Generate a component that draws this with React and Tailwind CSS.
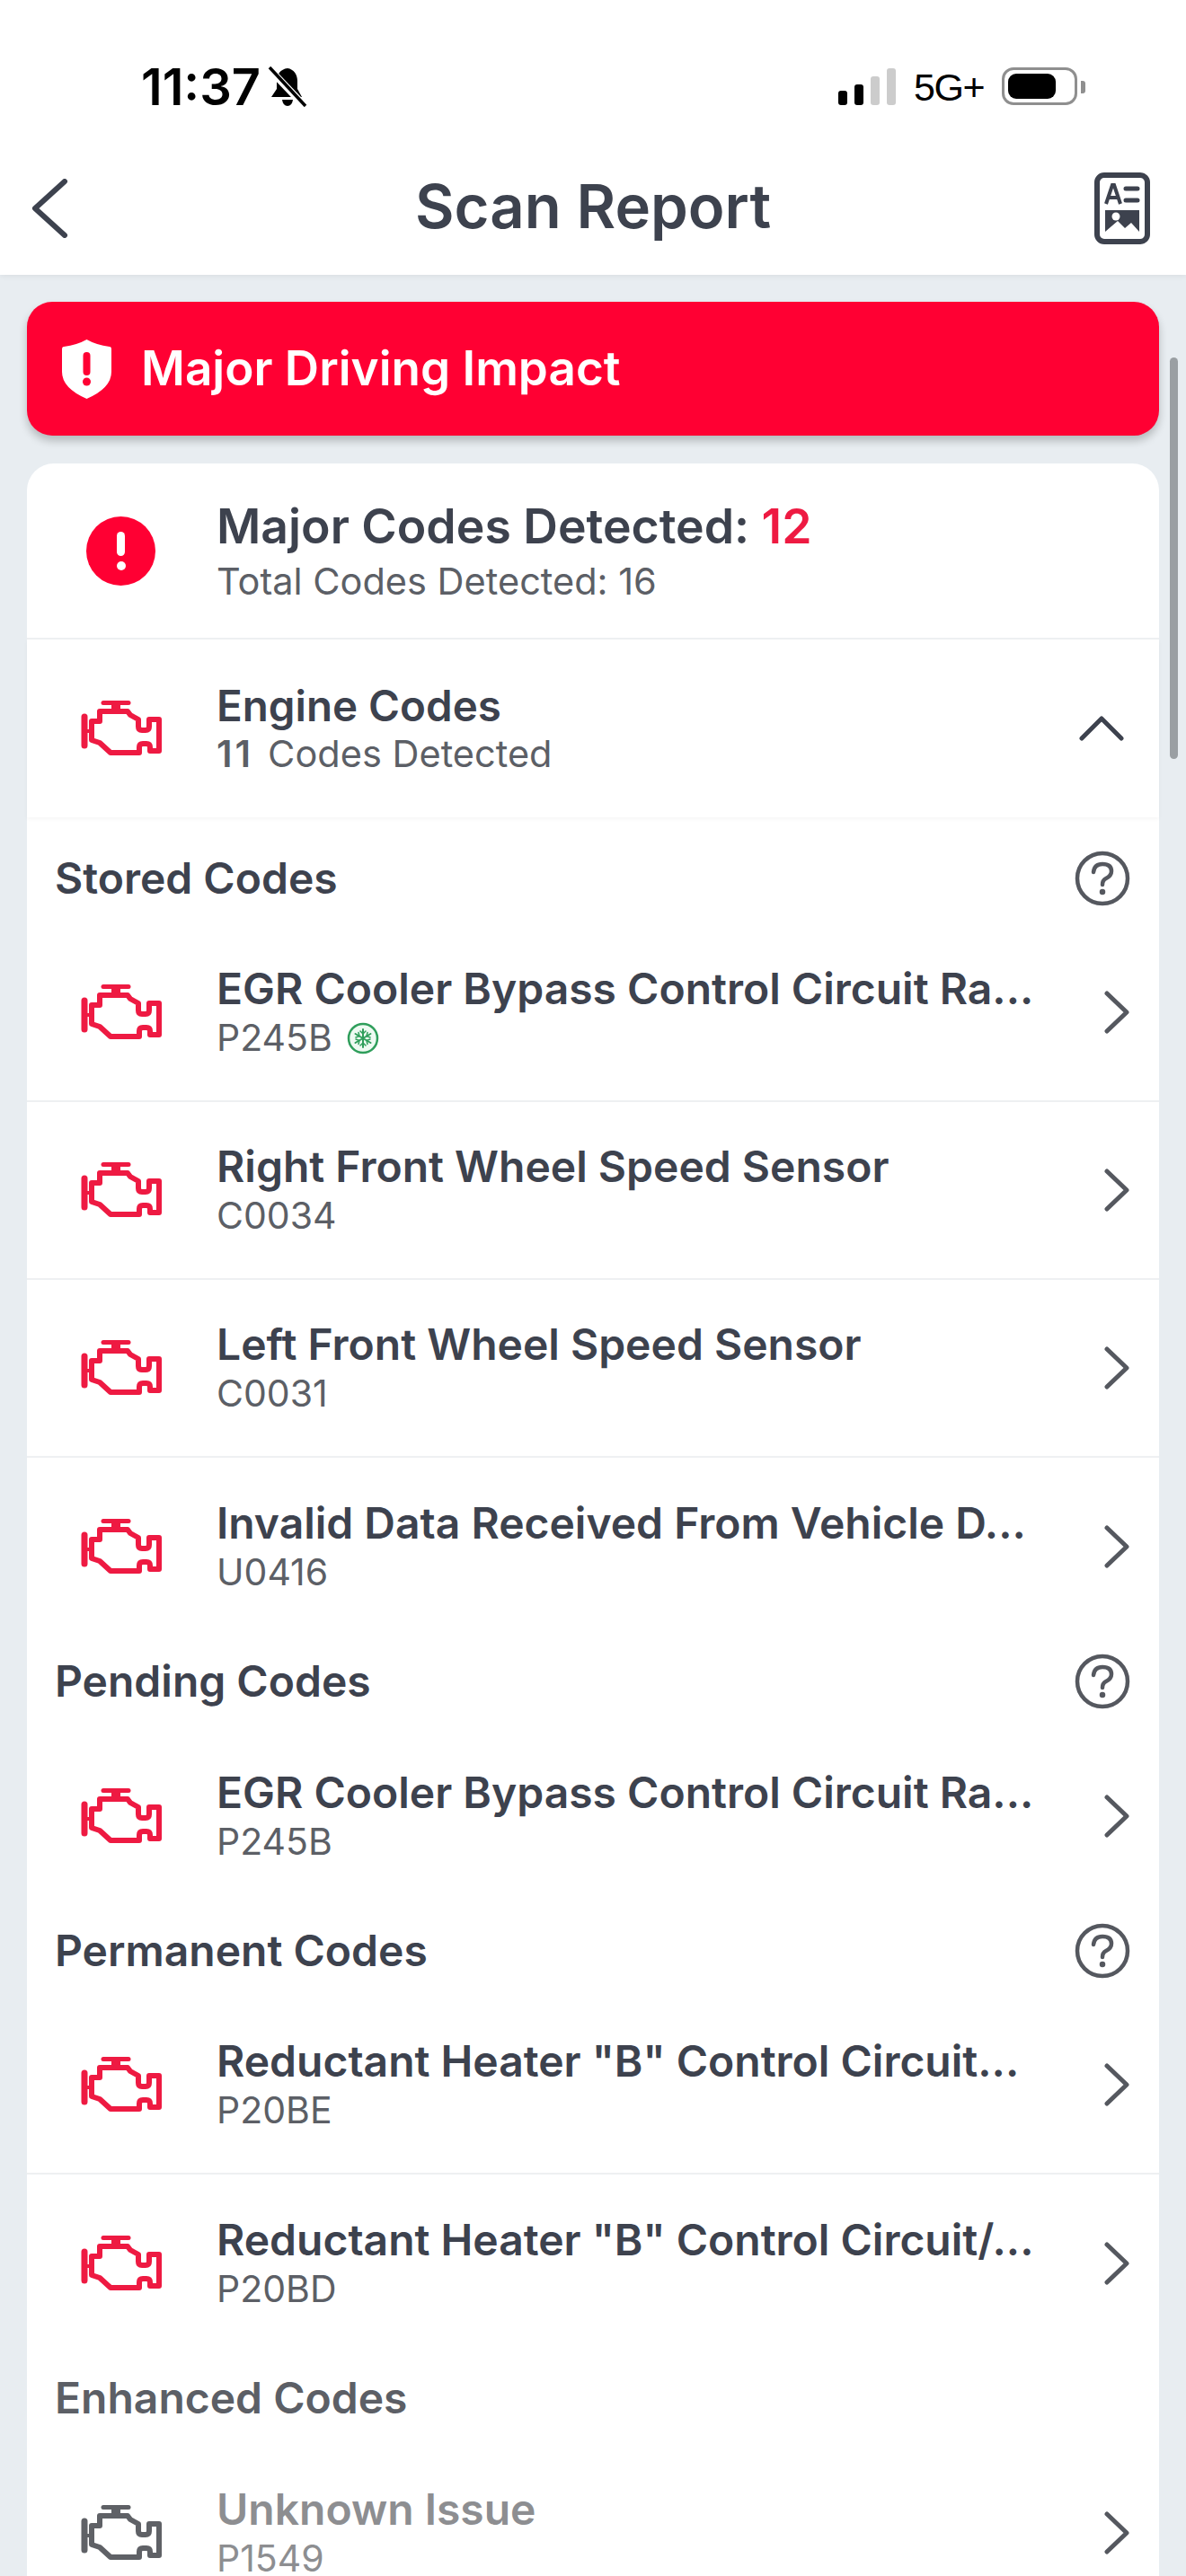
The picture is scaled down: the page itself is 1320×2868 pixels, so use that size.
const inter = "font-['Inter',sans-serif]";

function EngineIcon({ color = '#ee1a42' }) {
    return (
        <svg width="90" height="62" viewBox="0 0 90 62" fill="none" stroke={color} strokeWidth="6" strokeLinejoin="round" strokeLinecap="round">
            <path d="M25 2.5H53" strokeWidth="5" />
            <path d="M39 3V11" strokeWidth="10" strokeLinecap="butt" />
            <path d="M21 12H52L55 16L64 21V29Q64 33 68 33H72Q76 33 76 29V21H87V56H77V52Q77 48 73 48H69Q65 48 65 52V58H33L21 47L12 44V23H21Z" />
            <path d="M4 18V50" strokeWidth="7" />
            <path d="M7 34H12" strokeWidth="4" />
        </svg>
    );
}

function ChevronRight() {
    return (
        <svg width="30" height="48" viewBox="0 0 30 48" fill="none" stroke="#55585f" strokeWidth="5" strokeLinecap="round" strokeLinejoin="round">
            <path d="M4 3L26 24L4 45" />
        </svg>
    );
}

function HelpIcon() {
    return (
        <svg width="62" height="62" viewBox="0 0 62 62" fill="none" stroke="#55585f" strokeWidth="4.5" strokeLinecap="round">
            <circle cx="31" cy="31" r="28" />
            <path d="M21 24Q22 15 31 15Q41 15 41 23Q41 28 35 31Q31 33 31 38" />
            <circle cx="31" cy="46" r="2.5" fill="#55585f" strokeWidth="1.5" />
        </svg>
    );
}

function SnowBadge() {
    return (
        <svg width="36" height="36" viewBox="0 0 36 36" fill="none" stroke="#2f9e5b" strokeLinecap="round">
            <circle cx="18" cy="18" r="16" strokeWidth="2.5" fill="#eefaf2" />
            <g strokeWidth="2">
                <path d="M18 8V28M9.5 13L26.5 23M26.5 13L9.5 23" />
                <path d="M15 10L18 13L21 10M15 26L18 23L21 26M10 17L14 15.5L13 11.5M26 19L22 20.5L23 24.5M26 17L22 15.5L23 11.5M10 19L14 20.5L13 24.5" strokeWidth="1.5" />
            </g>
        </svg>
    );
}

function CodeRow({ title, code, frozen, muted, last }) {
    return (
        <div className={`h-[198px] flex items-center ${last ? '' : 'border-b-2 border-[#eef0f2]'}`}>
            <div className="w-[211px] pl-[60px] shrink-0">
                <EngineIcon color={muted ? '#5f6166' : '#ee1a42'} />
            </div>
            <div className="flex-1 min-w-0 pt-[2px]">
                <div className={`text-[48px] leading-[55px] font-semibold whitespace-nowrap ${muted ? 'text-[#8d8e91]' : 'text-[#3d424e]'}`}>{title}</div>
                <div className={`flex items-center gap-[16px] text-[41px] leading-[55px] ${muted ? 'text-[#8d8e91]' : 'text-[#5c5f66]'}`}>
                    {code}
                    {frozen && <SnowBadge />}
                </div>
            </div>
            <div className="w-[62px] shrink-0">
                <ChevronRight />
            </div>
        </div>
    );
}

function SectionHead({ title, help = true, first, muted }) {
    return (
        <div className={`flex items-center justify-between pl-[31px] pr-[32px] ${first ? 'h-[119px] pt-[17px]' : 'h-[102px]'}`}>
            <span className={`text-[48px] font-semibold ${muted ? 'text-[#5c5f66]' : 'text-[#3d424e]'}`}>{title}</span>
            {help && <HelpIcon />}
        </div>
    );
}

export default function App() {
    return (
        <div className={`relative w-[1320px] h-[2868px] overflow-hidden bg-[#e8edf1] ${inter}`}>
            {/* Status bar + title */}
            <div className="h-[306px] bg-white shadow-[0_2px_6px_rgba(0,0,0,0.06)]">
                <div className="h-[192px] flex items-start pl-[157px] pr-[112px] pt-[62px] text-black">
                    <span className="text-[56px] leading-[70px] font-semibold">11:37</span>
                    <svg className="mt-[12px] ml-[8px]" width="44" height="46" viewBox="0 0 44 46">
                        <path d="M22 2C14 3 10 9 10 16V25L4 34H38L33 25V16C33 9 29 3 22 2Z" fill="black" />
                        <path d="M16 37H28Q27 44 22 44Q17 44 16 37Z" fill="black" />
                        <path d="M1 2L41 44" stroke="white" strokeWidth="8" />
                        <path d="M2 1L42 44" stroke="black" strokeWidth="3.5" />
                    </svg>
                    <div className="flex-1" />
                    <div className="flex items-end gap-[8px] h-[41px] mt-[14px]">
                        <div className="w-[10px] h-[16px] rounded-[3px] bg-black" />
                        <div className="w-[10px] h-[23px] rounded-[3px] bg-black" />
                        <div className="w-[10px] h-[32px] rounded-[3px] bg-[#cccccc]" />
                        <div className="w-[10px] h-[41px] rounded-[3px] bg-[#cccccc]" />
                    </div>
                    <span className="ml-[20px] mt-[10px] text-[43px] leading-[50px] font-medium tracking-[-1.5px] font-['Liberation_Sans',sans-serif]">5G+</span>
                    <div className="ml-[20px] mt-[13px] w-[84px] h-[42px] rounded-[13px] border-[3px] border-[#8f8f8f] p-[4px]">
                        <div className="w-[53px] h-full rounded-[9px] bg-black" />
                    </div>
                    <div className="mt-[28px] ml-[4px] w-[5px] h-[14px] rounded-r-[3px] bg-[#8f8f8f]" />
                </div>
                <div className="grid grid-cols-[1fr_auto_1fr] items-center pl-[34px] pr-[40px] h-[80px]">
                    <svg width="42" height="66" viewBox="0 0 42 66" fill="none" stroke="#3d424e" strokeWidth="6" strokeLinecap="round" strokeLinejoin="round">
                        <path d="M38 3L5 33L38 63" />
                    </svg>
                    <h1 className="text-[67px] font-semibold text-[#3d424e] leading-none -mt-[6px] ml-[6px]">Scan Report</h1>
                    <svg className="justify-self-end" width="62" height="80" viewBox="0 0 62 80" fill="none">
                        <rect x="3" y="3" width="56" height="74" rx="8" stroke="#3d424e" strokeWidth="6" />
                        <path d="M13 35L20 14H22L29 35M15.5 28H26.5" stroke="#3d424e" strokeWidth="4" />
                        <path d="M35 18H48M35 31H48" stroke="#3d424e" strokeWidth="5" strokeLinecap="round" />
                        <path d="M12 42H50V66L41 56L34 62L26 54L12 66Z" fill="#3d424e" />
                        <circle cx="24" cy="49" r="4.5" fill="white" />
                    </svg>
                </div>
            </div>

            <div className="px-[30px] pt-[30px]">
                {/* Impact banner */}
                <div className="h-[149px] flex items-center pl-[39px] rounded-[28px] bg-[#ff0033] shadow-[0_6px_10px_rgba(0,0,0,0.22)]">
                    <svg width="55" height="66" viewBox="0 0 55 66">
                        <path d="M27.5 0Q38 6 53 8Q55 8 55 11V36Q55 54 27.5 66Q0 54 0 36V11Q0 8 2 8Q17 6 27.5 0Z" fill="white" />
                        <rect x="23.5" y="14" width="8" height="26" rx="4" fill="#ff0033" />
                        <circle cx="27.5" cy="47" r="4.5" fill="#ff0033" />
                    </svg>
                    <span className="ml-[33px] text-[53px] font-semibold text-white">Major Driving Impact</span>
                </div>

                {/* Report card */}
                <div className="mt-[31px] rounded-t-[30px] bg-white">
                    <div className="h-[196px] flex items-center border-b-2 border-[#eef0f2]">
                        <div className="w-[211px] pl-[66px] shrink-0">
                            <div className="w-[77px] h-[77px] rounded-full bg-[#ff0033] flex flex-col items-center justify-center gap-[6px]">
                                <div className="w-[9px] h-[27px] rounded-full bg-white" />
                                <div className="w-[10px] h-[10px] rounded-full bg-white" />
                            </div>
                        </div>
                        <div className="pt-[2px]">
                            <div className="text-[53.5px] leading-[66px] font-semibold text-[#3d424e]">Major Codes Detected: <span className="text-[#ee1a42]">12</span></div>
                            <div className="text-[41.5px] leading-[56px] text-[#5c5f66]">Total Codes Detected: 16</div>
                        </div>
                    </div>
                    <div className="h-[198px] flex items-center shadow-[0_2px_4px_rgba(0,0,0,0.04)]">
                        <div className="w-[211px] pl-[60px] shrink-0">
                            <EngineIcon />
                        </div>
                        <div className="flex-1">
                            <div className="text-[47.5px] leading-[55px] font-semibold text-[#3d424e]">Engine Codes</div>
                            <div className="text-[41.5px] leading-[52px] text-[#5c5f66]"><span className="font-semibold tracking-[3px]">11</span><span className="ml-[16px]">Codes Detected</span></div>
                        </div>
                        <svg className="mr-[39px]" width="50" height="30" viewBox="0 0 50 30" fill="none" stroke="#3d424e" strokeWidth="5" strokeLinecap="round" strokeLinejoin="round">
                            <path d="M3 26L25 4L47 26" />
                        </svg>
                    </div>

                    <SectionHead title="Stored Codes" first />
                    <CodeRow title="EGR Cooler Bypass Control Circuit Ra..." code="P245B" frozen />
                    <CodeRow title="Right Front Wheel Speed Sensor" code="C0034" />
                    <CodeRow title="Left Front Wheel Speed Sensor" code="C0031" />
                    <CodeRow title="Invalid Data Received From Vehicle D..." code="U0416" last />

                    <SectionHead title="Pending Codes" />
                    <CodeRow title="EGR Cooler Bypass Control Circuit Ra..." code="P245B" last />

                    <SectionHead title="Permanent Codes" />
                    <CodeRow title={'Reductant Heater "B" Control Circuit...'} code="P20BE" />
                    <CodeRow title={'Reductant Heater "B" Control Circuit/...'} code="P20BD" last />

                    <SectionHead title="Enhanced Codes" help={false} muted />
                    <CodeRow title="Unknown Issue" code="P1549" muted last />
                </div>
            </div>

            {/* scrollbar thumb */}
            <div className="absolute left-[1302px] top-[398px] w-[9px] h-[447px] rounded-full bg-[#9a9fa3]" />
        </div>
    );
}
